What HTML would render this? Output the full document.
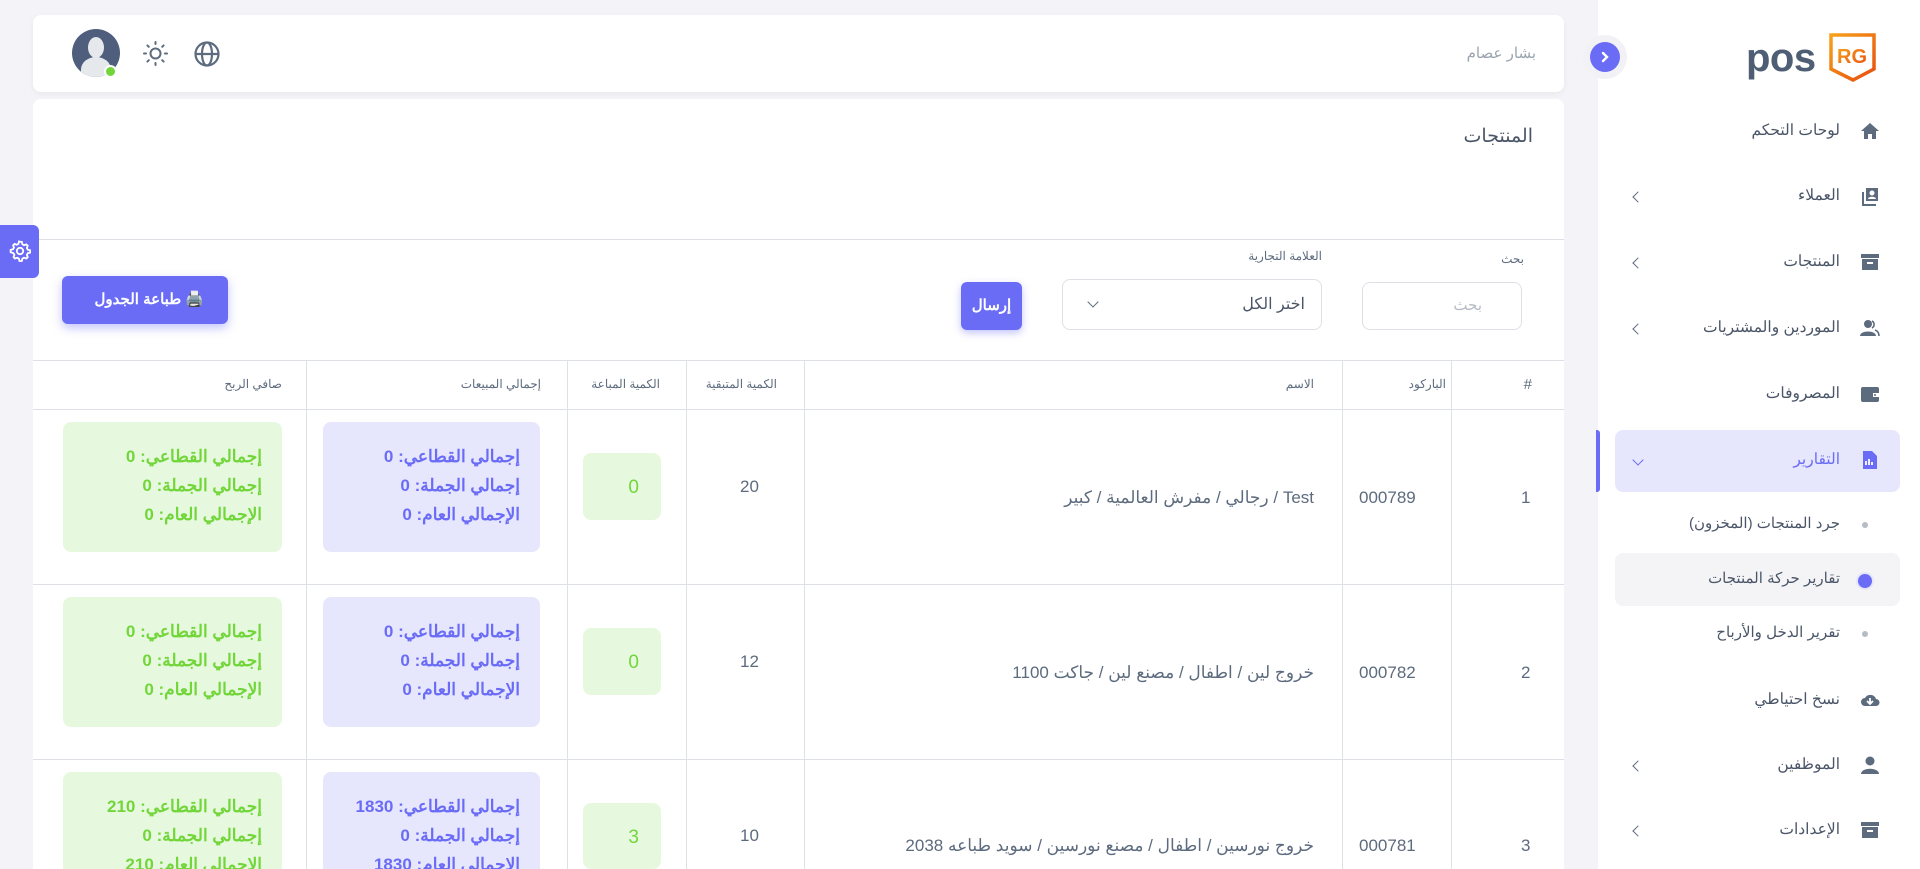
<!DOCTYPE html>
<html style="width:1920px;height:869px;overflow:hidden"><head><meta charset="utf-8"><style>
*{box-sizing:border-box;margin:0;padding:0}
body{width:1920px;height:869px;overflow:hidden;background:#f4f4f8;font-family:"Liberation Sans","Noto Sans CJK SC",sans-serif;color:#5d6b7e;position:relative}
.a{position:absolute}
.r{direction:rtl;text-align:right;white-space:nowrap}
.card{background:#fff;border-radius:8px}
.vl{position:absolute;width:1px;background:#dde1e6}
.hl{position:absolute;height:1px;background:#dde1e6}
.box{position:absolute;border-radius:8px;direction:rtl;text-align:right;font-weight:bold;font-size:17px;line-height:29px;padding:20px 20px 0 0;overflow:hidden}
.g{background:#e6f9df;color:#72d63a}
.b{background:#e6e6fd;color:#6a6cf6}
.si{position:absolute;right:40px;width:20px;height:20px;fill:#5d6b7e}
.st{position:absolute;right:80px;font-size:15.5px;color:#4a5568;direction:rtl;white-space:nowrap}
.ch{position:absolute;left:1634px;width:8px;height:8px;border-left:1.5px solid #5d6b7e;border-bottom:1.5px solid #5d6b7e;transform:rotate(45deg)}
</style></head><body>

<!-- sidebar -->
<div class="a" style="left:1598px;top:0;width:322px;height:869px;background:#fff"></div>
<div class="a" style="left:1583px;top:35px;width:44px;height:44px;border-radius:50%;background:#f1f1f6"></div>
<div class="a" style="left:1590px;top:42px;width:30px;height:30px;border-radius:50%;background:#6a6cf6"></div>
<svg class="a" style="left:1598px;top:50px" width="14" height="14" viewBox="0 0 14 14"><path d="M5 3l4 4-4 4" stroke="#fff" stroke-width="2.4" fill="none" stroke-linecap="round"/></svg>

<div class="a" style="left:1746px;top:38px;font-size:40px;font-weight:bold;color:#4f5e74;letter-spacing:-0.5px;line-height:40px">pos</div>
<svg class="a" style="left:1829px;top:33px" width="47" height="50" viewBox="0 0 47 50"><defs><linearGradient id="og" x1="0" y1="0" x2="1" y2="1"><stop offset="0" stop-color="#f6a21a"/><stop offset="1" stop-color="#e84e0f"/></linearGradient></defs><path d="M2 2h43v34l-21 11L2 36z" fill="none" stroke="url(#og)" stroke-width="3.5"/><text x="23" y="30" font-size="20" font-weight="bold" fill="url(#og)" text-anchor="middle" font-family="Liberation Sans">RG</text></svg>

<!-- menu -->
<svg class="si" style="top:121px" viewBox="0 0 20 20"><path d="M10 2L1 10h3v8h4v-5h4v5h4v-8h3z"/></svg>
<div class="st" style="top:121px">لوحات التحكم</div>

<svg class="si" style="top:186px" viewBox="0 0 20 20"><path d="M6 2h12v13H6z M2 6h2v12h12v2H2z"/><circle cx="12" cy="7" r="2.5" fill="#fff"/><path d="M8 13c0-3 8-3 8 0z" fill="#fff"/></svg>
<div class="st" style="top:186px">العملاء</div><div class="ch" style="top:193px"></div>

<svg class="si" style="top:252px" viewBox="0 0 20 20"><path d="M1 2h18v4H1z M2 7h16v11H2z"/><rect x="7" y="10" width="6" height="2" fill="#fff"/></svg>
<div class="st" style="top:252px">المنتجات</div><div class="ch" style="top:259px"></div>

<svg class="si" style="top:318px" viewBox="0 0 20 20"><circle cx="8" cy="6" r="4"/><path d="M0 18c0-6 16-6 16 0z"/><path d="M12 3a4 4 0 010 7M15 12c3 1 4 3 4 6" stroke="#5d6b7e" stroke-width="1.6" fill="none"/></svg>
<div class="st" style="top:318px">الموردين والمشتريات</div><div class="ch" style="top:325px"></div>

<svg class="si" style="top:384px" viewBox="0 0 20 20"><rect x="1" y="3" width="18" height="15" rx="2"/><rect x="13" y="9" width="6" height="4" fill="#fff"/><circle cx="15" cy="11" r="1"/></svg>
<div class="st" style="top:384px">المصروفات</div>

<div class="a" style="left:1596px;top:430px;width:4px;height:62px;border-radius:0 3px 3px 0;background:#6a6cf6"></div>
<div class="a" style="left:1615px;top:430px;width:285px;height:62px;border-radius:8px;background:#e6e6fd"></div>
<svg class="si" style="top:450px;fill:#6a6cf6" viewBox="0 0 20 20"><path d="M3 1h9l5 5v13H3z"/><path d="M6 15v-4M9 15V9M12 15v-3" stroke="#fff" stroke-width="1.8"/></svg>
<div class="st" style="top:450px;color:#6a6cf6">التقارير</div>
<div class="ch" style="top:456px;transform:rotate(-45deg);border-color:#6a6cf6"></div>

<div class="a" style="left:1862px;top:522px;width:6px;height:6px;border-radius:50%;background:#b6bcc5"></div>
<div class="st" style="top:514px;font-size:15px">جرد المنتجات (المخزون)</div>
<div class="a" style="left:1615px;top:553px;width:285px;height:53px;border-radius:8px;background:#f4f4f6"></div>
<div class="a" style="left:1858px;top:574px;width:14px;height:14px;border-radius:50%;background:#6a6cf6;box-shadow:0 0 0 2px #e6e6fd"></div>
<div class="st" style="top:569px;font-size:15px">تقارير حركة المنتجات</div>
<div class="a" style="left:1862px;top:631px;width:6px;height:6px;border-radius:50%;background:#b6bcc5"></div>
<div class="st" style="top:623px;font-size:15px">تقرير الدخل والأرباح</div>

<svg class="si" style="top:690px" viewBox="0 0 20 20"><path d="M5 16a4 4 0 010-8 6 6 0 0111 1 3.5 3.5 0 010 7z"/><path d="M10 8v6M7 11l3 3 3-3" stroke="#fff" stroke-width="1.8" fill="none"/></svg>
<div class="st" style="top:690px">نسخ احتياطي</div>
<svg class="si" style="top:755px" viewBox="0 0 20 20"><circle cx="10" cy="6" r="4.5"/><path d="M1 19c0-7 18-7 18 0z"/></svg>
<div class="st" style="top:755px">الموظفين</div><div class="ch" style="top:762px"></div>
<svg class="si" style="top:820px" viewBox="0 0 20 20"><path d="M1 2h18v4H1z M2 7h16v11H2z"/><rect x="7" y="10" width="6" height="2" fill="#fff"/></svg>
<div class="st" style="top:820px">الإعدادات</div><div class="ch" style="top:827px"></div>

<!-- header -->
<div class="a card" style="left:33px;top:15px;width:1531px;height:77px;box-shadow:0 2px 6px rgba(0,0,0,.05)"></div>
<div class="a r" style="right:384px;top:44px;font-size:15px;color:#9aa3af">بشار عصام</div>
<div class="a" style="left:72px;top:29px;width:48px;height:48px;border-radius:50%;background:#4f5e7d;overflow:hidden"><div class="a" style="left:16px;top:8px;width:16px;height:21px;border-radius:50%;background:#e6e9ec"></div><div class="a" style="left:9px;top:28px;width:30px;height:25px;border-radius:50% 50% 0 0;background:#e6e9ec"></div></div>
<div class="a" style="left:104px;top:65px;width:13px;height:13px;border-radius:50%;background:#72d63a;border:2px solid #fff"></div>
<svg class="a" style="left:142px;top:40px" width="27" height="27" viewBox="0 0 27 27" stroke="#5d6b7e" stroke-width="2" fill="none" stroke-linecap="round"><circle cx="13.5" cy="13.5" r="5"/><path d="M13.5 2v2M13.5 23v2M2 13.5h2M23 13.5h2M5.4 5.4l1.4 1.4M20.2 20.2l1.4 1.4M5.4 21.6l1.4-1.4M20.2 6.8l1.4-1.4"/></svg>
<svg class="a" style="left:193px;top:40px" width="28" height="28" viewBox="0 0 28 28" stroke="#5d6b7e" stroke-width="2.2" fill="none"><circle cx="14" cy="14" r="11.5"/><ellipse cx="14" cy="14" rx="5" ry="11.5"/><path d="M2.5 14h23"/></svg>

<!-- main card -->
<div class="a card" style="left:33px;top:99px;width:1531px;height:790px"></div>
<div class="a r" style="right:387px;top:125px;font-size:19px;color:#4a5568">المنتجات</div>
<div class="hl" style="left:33px;top:239px;width:1531px"></div>

<div class="a" style="left:0;top:225px;width:39px;height:53px;background:#6a6cf6;border-radius:0 6px 6px 0"></div>
<svg class="a" style="left:9px;top:239px" width="22" height="24" viewBox="0 0 24 24" stroke="#fff" stroke-width="2" fill="none"><path d="M12 1.8l2 .3.6 2.6 1.8 1 2.5-.9 1.5 1.5-.9 2.5 1 1.8 2.6.6v2.6l-2.6.6-1 1.8.9 2.5-1.5 1.5-2.5-.9-1.8 1-.6 2.6h-2.6l-.6-2.6-1.8-1-2.5.9-1.5-1.5.9-2.5-1-1.8L1.8 13.3v-2.6l2.6-.6 1-1.8-.9-2.5 1.5-1.5 2.5.9 1.8-1 .6-2.6z"/><circle cx="12" cy="12" r="3.5"/></svg>

<!-- filters -->
<div class="a r" style="right:396px;top:252px;font-size:12px;color:#5d6b7e">بحث</div>
<div class="a" style="left:1362px;top:282px;width:160px;height:48px;border:1px solid #dde1e6;border-radius:8px"></div>
<div class="a r" style="right:438px;top:296px;font-size:15px;color:#b6bcc5">بحث</div>
<div class="a r" style="right:598px;top:249px;font-size:12px;color:#5d6b7e">العلامة التجارية</div>
<div class="a" style="left:1062px;top:279px;width:260px;height:51px;border:1px solid #dde1e6;border-radius:8px"></div>
<div class="a r" style="right:615px;top:294px;font-size:16px;color:#4a5568">اختر الكل</div>
<div class="a" style="left:1089px;top:298px;width:8px;height:8px;border-left:1.3px solid #5d6b7e;border-bottom:1.3px solid #5d6b7e;transform:rotate(-45deg)"></div>
<div class="a" style="left:961px;top:282px;width:61px;height:48px;background:#6a6cf6;border-radius:6px;box-shadow:0 3px 8px rgba(106,108,246,.4);color:#fff;font-weight:bold;font-size:15px;text-align:center;line-height:48px">إرسال</div>
<div class="a" style="left:62px;top:276px;width:166px;height:48px;background:#6a6cf6;border-radius:6px;box-shadow:0 4px 10px rgba(106,108,246,.4);color:#fff;font-weight:bold;font-size:15px;line-height:48px;direction:rtl;padding-right:24px">🖨️ طباعة الجدول</div>

<!-- table -->
<div class="hl" style="left:33px;top:360px;width:1531px"></div>
<div class="hl" style="left:33px;top:409px;width:1531px"></div>
<div class="hl" style="left:33px;top:584px;width:1531px"></div>
<div class="hl" style="left:33px;top:759px;width:1531px"></div>
<div class="vl" style="left:306px;top:360px;height:509px"></div>
<div class="vl" style="left:567px;top:360px;height:509px"></div>
<div class="vl" style="left:686px;top:360px;height:509px"></div>
<div class="vl" style="left:804px;top:360px;height:509px"></div>
<div class="vl" style="left:1342px;top:360px;height:509px"></div>
<div class="vl" style="left:1451px;top:360px;height:509px"></div>

<div class="a r" style="right:388px;top:376px;font-size:15px">#</div>
<div class="a r" style="right:474px;top:377px;font-size:12px">الباركود</div>
<div class="a r" style="right:606px;top:377px;font-size:12px">الاسم</div>
<div class="a r" style="right:1143px;top:377px;font-size:12px">الكمية المتبقية</div>
<div class="a r" style="right:1260px;top:377px;font-size:12px">الكمية المباعة</div>
<div class="a r" style="right:1379px;top:377px;font-size:12px">إجمالي المبيعات</div>
<div class="a r" style="right:1638px;top:377px;font-size:12px">صافي الربح</div>

<!-- row 1 -->
<div class="a" style="left:1521px;top:488px;font-size:17px">1</div>
<div class="a" style="left:1359px;top:488px;font-size:17px">000789</div>
<div class="a r" style="right:606px;top:488px;font-size:17px">Test / رجالي / مفرش العالمية / كبير</div>
<div class="a" style="left:740px;top:477px;font-size:17px">20</div>
<div class="box g" style="left:583px;top:453px;width:78px;height:67px;padding:20px 22px 0 0;font-weight:normal;font-size:19px">0</div>
<div class="box b" style="left:323px;top:422px;width:217px;height:130px">إجمالي القطاعي: 0<br>إجمالي الجملة: 0<br>الإجمالي العام: 0</div>
<div class="box g" style="left:63px;top:422px;width:219px;height:130px">إجمالي القطاعي: 0<br>إجمالي الجملة: 0<br>الإجمالي العام: 0</div>

<!-- row 2 -->
<div class="a" style="left:1521px;top:663px;font-size:17px">2</div>
<div class="a" style="left:1359px;top:663px;font-size:17px">000782</div>
<div class="a r" style="right:606px;top:663px;font-size:17px">خروج لين / اطفال / مصنع لين / جاكت 1100</div>
<div class="a" style="left:740px;top:652px;font-size:17px">12</div>
<div class="box g" style="left:583px;top:628px;width:78px;height:67px;padding:20px 22px 0 0;font-weight:normal;font-size:19px">0</div>
<div class="box b" style="left:323px;top:597px;width:217px;height:130px">إجمالي القطاعي: 0<br>إجمالي الجملة: 0<br>الإجمالي العام: 0</div>
<div class="box g" style="left:63px;top:597px;width:219px;height:130px">إجمالي القطاعي: 0<br>إجمالي الجملة: 0<br>الإجمالي العام: 0</div>

<!-- row 3 -->
<div class="a" style="left:1521px;top:836px;font-size:17px">3</div>
<div class="a" style="left:1359px;top:836px;font-size:17px">000781</div>
<div class="a r" style="right:606px;top:836px;font-size:17px">خروج نورسين / اطفال / مصنع نورسين / سويد طباعه 2038</div>
<div class="a" style="left:740px;top:826px;font-size:17px">10</div>
<div class="box g" style="left:583px;top:803px;width:78px;height:66px;padding:20px 22px 0 0;font-weight:normal;font-size:19px">3</div>
<div class="box b" style="left:323px;top:772px;width:217px;height:97px;border-radius:8px 8px 0 0">إجمالي القطاعي: 1830<br>إجمالي الجملة: 0<br>الإجمالي العام: 1830</div>
<div class="box g" style="left:63px;top:772px;width:219px;height:97px;border-radius:8px 8px 0 0">إجمالي القطاعي: 210<br>إجمالي الجملة: 0<br>الإجمالي العام: 210</div>

</body></html>
